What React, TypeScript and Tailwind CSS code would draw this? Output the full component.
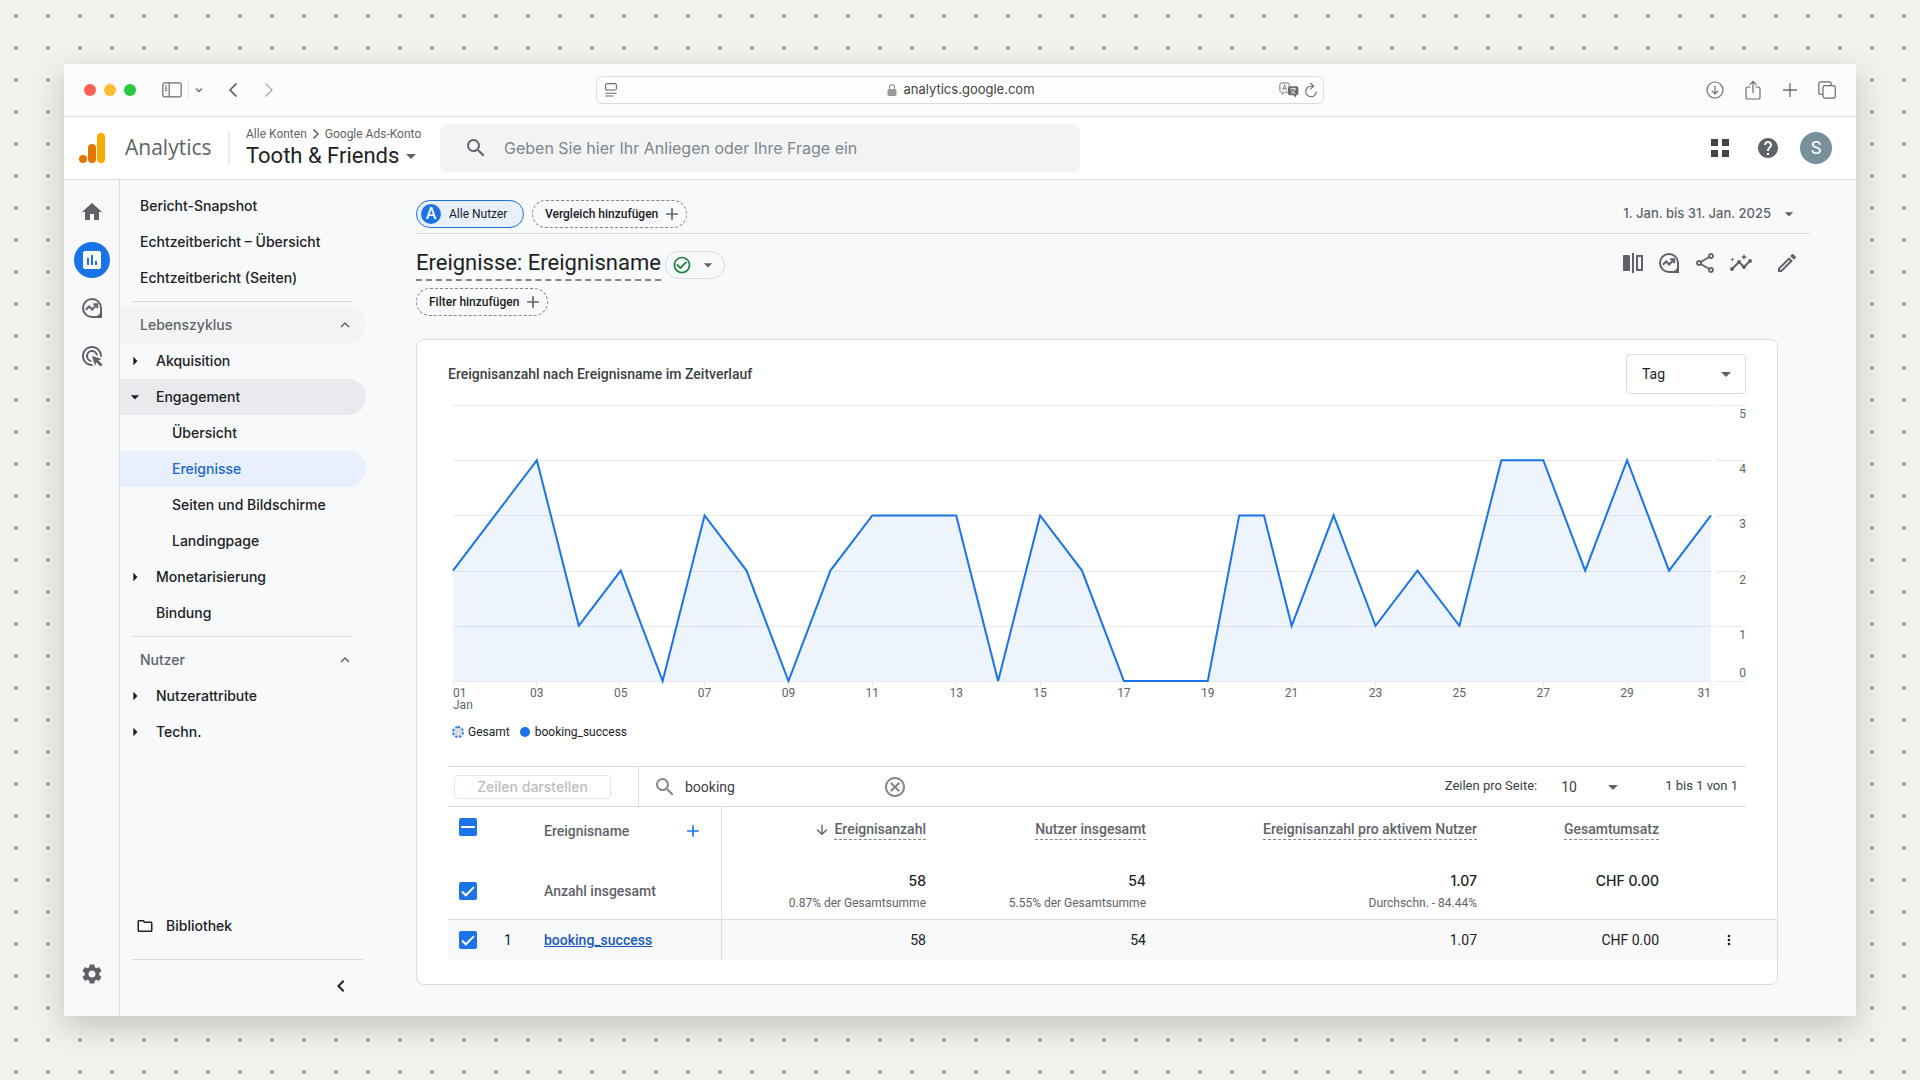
import React from 'react';
import {
  MdAdd,
  MdAdsClick,
  MdArrowDownward,
  MdArrowDropDown,
  MdArrowRight,
  MdCheckCircleOutline,
  MdChevronLeft,
  MdHelp,
  MdHome,
  MdInsertChart,
  MdInsights,
  MdKeyboardArrowUp,
  MdMoreVert,
  MdOutlineCancel,
  MdOutlineEdit,
  MdOutlineFolder,
  MdOutlineShare,
  MdSearch,
  MdSettings,
} from 'react-icons/md';

const SidebarIcon = () => (
  <svg className="h-4 w-5" viewBox="0 0 20 16" fill="none" stroke="#6b6b6b" strokeWidth="1.2">
    <rect x="0.8" y="0.8" width="18.4" height="14" rx="2" />
    <path d="M7.2 1v13.8M2.8 4h2.4M2.8 6.2h2.4M2.8 8.4h2.4" />
  </svg>
);

const ReaderIcon = () => (
  <svg className="h-[14px] w-3" viewBox="0 0 12 14" fill="none" stroke="#6b6b6b" strokeWidth="1.1">
    <rect x="0.6" y="0.6" width="10.8" height="6.4" rx="1.4" />
    <path d="M0.4 10.2h11.2M0.4 13h8" />
  </svg>
);

const TranslateIcon = () => (
  <svg className="h-4 w-5" viewBox="0 0 20 16" fill="none">
    <path
      d="M2.5 1h6.2c1 0 1.6.6 1.6 1.6v6c0 1-.6 1.6-1.6 1.6H5.6l-2.2 2.2v-2.2h-.9c-1 0-1.6-.6-1.6-1.6v-6C.9 1.6 1.5 1 2.5 1Z"
      stroke="#777"
    />
    <path d="m3.6 8.2 2-5.4 2 5.4M4.3 6.4h2.6" stroke="#777" strokeWidth="0.9" />
    <rect x="9" y="4.2" width="10.4" height="9" rx="1.8" fill="#6b6b6b" />
    <path d="m14.4 13 2.6 2.7V13Z" fill="#6b6b6b" />
    <path d="M11.3 6.8h5.8M14.2 5.6v1.2M12.2 11.6c2-.9 3.2-2.3 3.8-4.6M12.4 8.4c.6 1.5 1.9 2.6 3.8 3.2" stroke="#fff" strokeWidth="0.9" />
  </svg>
);

const ReloadIcon = () => (
  <svg className="h-4 w-3" viewBox="0 0 12 16" fill="none" stroke="#6b6b6b" strokeWidth="1.1">
    <path d="M8.4 4.2H6a5.3 5.3 0 1 0 5.3 5.4M5.4 1l3.2 3.2-3.2 3" />
  </svg>
);

const DownloadIcon = () => (
  <svg className="size-[18px]" viewBox="0 0 18 18" fill="none" stroke="#6b6b6b" strokeWidth="1.2">
    <circle cx="9" cy="9" r="8" />
    <path d="M9 4.8v8M5.8 9.8 9 13l3.2-3.2" />
  </svg>
);

const ShareUpIcon = () => (
  <svg className="h-5 w-[18px]" viewBox="0 0 18 20" fill="none" stroke="#6b6b6b" strokeWidth="1.2">
    <rect x="2" y="7" width="14" height="12" rx="1.6" />
    <path d="M6.6 7h4.8" stroke="#fcfcfc" strokeWidth="2" />
    <path d="M9 13V1.6M5.6 4.8 9 1.4l3.4 3.4" />
  </svg>
);

const TabsIcon = () => (
  <svg className="size-[18px]" viewBox="0 0 18 18" fill="none" stroke="#6b6b6b" strokeWidth="1.2">
    <rect x="5" y="4.6" width="12.3" height="12.6" rx="2" />
    <path d="M5 13.4H2.8c-1.3 0-2-.7-2-2V2.8c0-1.3.7-2 2-2h8.4c1.3 0 2 .7 2 2v1.8" />
  </svg>
);

const AnalyticsLogo = () => (
  <svg className="h-[30px] w-[26px]" viewBox="0 0 26 30">
    <rect x="18" y="0" width="8" height="30" rx="4" fill="#f9ab00" />
    <rect x="9" y="11" width="8" height="19" rx="4" fill="#e37400" />
    <circle cx="4" cy="26" r="4" fill="#e37400" />
  </svg>
);

const ExploreIcon = () => (
  <svg className="size-5" viewBox="0 0 20 20" fill="none" stroke="#5f6368" strokeWidth="2">
    <path d="M10 1a9 9 0 0 0 0 18h9v-9a9 9 0 0 0-9-9Z" />
    <path d="m3.8 11.8 3.4-3.3 3 3 4-4.2" />
    <path d="M11.2 6.2h4v4" />
    <path d="M19 13v6h-6c3-1 5-3 6-6Z" fill="#5f6368" stroke="none" />
  </svg>
);

const CompareIcon = () => (
  <svg className="size-[22px]" viewBox="0 0 22 22" fill="none">
    <rect x="1" y="3" width="7" height="16" rx="1" fill="#5f6368" />
    <path d="M11 1v20" stroke="#5f6368" strokeWidth="2" />
    <rect x="15" y="4" width="5" height="14" stroke="#5f6368" strokeWidth="2" />
  </svg>
);

const GridIcon = () => (
  <svg className="size-[18px]" viewBox="0 0 18 18" fill="#444">
    <path d="M0 0h7v7H0zM11 0h7v7h-7zM0 11h7v7H0zM11 11h7v7h-7z" />
  </svg>
);

const BrowserBar = () => (
  <div className="grid h-[53px] shrink-0 grid-cols-[1fr_minmax(0,728px)_1fr] items-center border-b border-[#dedede] bg-[#fcfcfc]">
    <div className="flex items-center pl-5">
      <div className="flex gap-2">
        <span className="size-3 rounded-full bg-[#ff5f57]" />
        <span className="size-3 rounded-full bg-[#febc2e]" />
        <span className="size-3 rounded-full bg-[#28c840]" />
      </div>
      <button aria-label="Seitenleiste" className="ml-[26px] flex">
        <SidebarIcon />
      </button>
      <button aria-label="Tabgruppen" className="ml-1.5 flex h-[18px] items-center border-l border-[#e5e5e5] pl-1.5">
        <svg className="size-2" viewBox="0 0 8 8" fill="none" stroke="#6b6b6b" strokeWidth="1.4">
          <path d="m1 2.5 3 3 3-3" />
        </svg>
      </button>
      <button aria-label="Zurück" className="ml-6 flex">
        <svg className="h-4 w-3" viewBox="0 0 12 16" fill="none" stroke="#555" strokeWidth="1.5">
          <path d="M9.5 1.5 3 8l6.5 6.5" />
        </svg>
      </button>
      <button aria-label="Vorwärts" className="ml-6 flex">
        <svg className="h-4 w-3" viewBox="0 0 12 16" fill="none" stroke="#b5b5b5" strokeWidth="1.5">
          <path d="M2.5 1.5 9 8l-6.5 6.5" />
        </svg>
      </button>
    </div>
    <div className="flex h-7 items-center rounded-md border border-[#dcdcdc] bg-[#fdfdfd] pl-2 pr-1.5">
      <div className="flex-1">
        <ReaderIcon />
      </div>
      <div className="flex items-center gap-1.5 font-[Inter,sans-serif] text-[13px] text-[#444]">
        <svg className="h-3 w-2.5" viewBox="0 0 10 12">
          <rect x="0.5" y="5" width="9" height="7" rx="1.5" fill="#999" />
          <path d="M2.5 5.5V3.2a2.5 2.5 0 0 1 5 0v2.3" fill="none" stroke="#999" strokeWidth="1.2" />
        </svg>
        analytics.google.com
      </div>
      <div className="flex flex-1 items-center justify-end gap-1.5">
        <TranslateIcon />
        <ReloadIcon />
      </div>
    </div>
    <div className="flex items-center justify-end gap-5 pr-5">
      <button aria-label="Downloads"><DownloadIcon /></button>
      <button aria-label="Teilen"><ShareUpIcon /></button>
      <button aria-label="Neuer Tab">
        <svg className="size-4" viewBox="0 0 16 16" stroke="#6b6b6b" strokeWidth="1.3">
          <path d="M8 1v14M1 8h14" />
        </svg>
      </button>
      <button aria-label="Tabs"><TabsIcon /></button>
    </div>
  </div>
);

const Header = () => (
  <header className="flex h-[63px] shrink-0 items-center border-b border-[#dadce0] bg-white pl-[15px] pr-6">
    <AnalyticsLogo />
    <span className="ml-5 w-[87px] font-['Open_Sans',sans-serif] text-[21px] text-[#5f6368]">Analytics</span>
    <div className="ml-4 h-8 w-0.5 bg-[#e8eaed]" />
    <div className="ml-4 w-[178px] whitespace-nowrap">
      <div className="flex items-center gap-1 text-xs leading-4 text-[#5f6368]">
        Alle Konten
        <svg className="h-3 w-2.5" viewBox="0 0 10 12" fill="none" stroke="#5f6368" strokeWidth="1.6">
          <path d="M2.5 1.5 7 6l-4.5 4.5" />
        </svg>
        Google Ads-Konto
      </div>
      <button className="flex items-center text-[22px] leading-7 text-[#202124]">
        Tooth &amp; Friends
        <MdArrowDropDown className="size-6 text-[#5f6368]" />
      </button>
    </div>
    <label className="ml-4 flex h-12 w-[640px] items-center rounded-md bg-[#f1f3f4] pl-6">
      <MdSearch className="size-6 text-[#5f6368]" />
      <input
        type="text"
        aria-label="Suche"
        placeholder="Geben Sie hier Ihr Anliegen oder Ihre Frage ein"
        className="ml-4 flex-1 bg-transparent font-[Inter,sans-serif] text-base outline-none placeholder:text-[#80868b]"
      />
    </label>
    <div className="ml-auto flex items-center">
      <button aria-label="Apps"><GridIcon /></button>
      <button aria-label="Hilfe" className="ml-[27px] mr-5"><MdHelp className="size-6 text-[#5f6368]" /></button>
      <button className="size-8 rounded-full bg-[#78909c] text-lg leading-8 text-white">S</button>
    </div>
  </header>
);

const Rail = () => (
  <nav className="flex w-14 shrink-0 flex-col items-center gap-3 border-r border-[#dadce0] pb-6 pt-[14px]">
    <a href="#" aria-label="Startseite" className="flex size-9 items-center justify-center">
      <MdHome className="size-6 text-[#5f6368]" />
    </a>
    <a href="#" aria-label="Berichte" className="flex size-9 items-center justify-center rounded-full bg-[#1a73e8]">
      <MdInsertChart className="size-6 text-white" />
    </a>
    <a href="#" aria-label="Explorative Datenanalyse" className="flex size-9 items-center justify-center">
      <ExploreIcon />
    </a>
    <a href="#" aria-label="Werbung" className="flex size-9 items-center justify-center">
      <MdAdsClick className="size-6 text-[#5f6368]" />
    </a>
    <a href="#" aria-label="Verwaltung" className="mt-auto flex size-9 items-center justify-center">
      <MdSettings className="size-6 text-[#5f6368]" />
    </a>
  </nav>
);

type NavItemProps = { label: string; level?: number; arrow?: 'right' | 'down'; className?: string };

const indent = ['pl-5', 'pl-9', 'pl-[52px]'];

const NavItem = ({ label, level = 0, arrow, className = 'text-[#202124]' }: NavItemProps) => (
  <a href="#" className={`relative mr-[3px] flex h-9 items-center rounded-r-full ${indent[level]} ${className}`}>
    {arrow === 'right' && <MdArrowRight className="absolute left-[5px] size-5" />}
    {arrow === 'down' && <MdArrowDropDown className="absolute left-[5px] size-5" />}
    {label}
  </a>
);

const NavSection = ({ label, className = '' }: { label: string; className?: string }) => (
  <button className={`mr-[3px] flex h-9 items-center justify-between rounded-r-full pl-5 pr-3 text-[#5f6368] ${className}`}>
    {label}
    <MdKeyboardArrowUp className="size-[18px]" />
  </button>
);

const Sidebar = () => (
  <nav className="flex w-[249px] shrink-0 flex-col pt-2 font-[Inter,sans-serif] text-sm font-medium">
    <NavItem label="Bericht-Snapshot" />
    <NavItem label="Echtzeitbericht – Übersicht" />
    <NavItem label="Echtzeitbericht (Seiten)" />
    <hr className="my-[5px] ml-3 mr-4 border-[#dadce0]" />
    <NavSection label="Lebenszyklus" className="bg-[#f1f3f4]" />
    <NavItem label="Akquisition" level={1} arrow="right" />
    <NavItem label="Engagement" level={1} arrow="down" className="bg-[#e8eaed] text-[#202124]" />
    <NavItem label="Übersicht" level={2} />
    <NavItem label="Ereignisse" level={2} className="bg-[#e8f0fe] text-[#1967d2]" />
    <NavItem label="Seiten und Bildschirme" level={2} />
    <NavItem label="Landingpage" level={2} />
    <NavItem label="Monetarisierung" level={1} arrow="right" />
    <NavItem label="Bindung" level={1} />
    <hr className="my-[5px] ml-3 mr-4 border-[#dadce0]" />
    <NavSection label="Nutzer" />
    <NavItem label="Nutzerattribute" level={1} arrow="right" />
    <NavItem label="Techn." level={1} arrow="right" />
    <a href="#" className="mt-auto flex h-9 items-center gap-3 pl-4 text-[#202124]">
      <MdOutlineFolder className="size-[18px]" />
      Bibliothek
    </a>
    <hr className="ml-3 mr-1.5 mt-[15px] border-[#dadce0]" />
    <button aria-label="Einklappen" className="mr-4 flex h-14 items-center self-end pb-1">
      <MdChevronLeft className="size-6 text-[#202124]" />
    </button>
  </nav>
);

const chip = 'flex h-7 items-center rounded-full text-xs text-[#202124]';
const iconButton = 'flex size-6 items-center justify-center text-[#5f6368]';

const ReportHeader = () => (
  <div className="mr-[46px]">
    <div className="flex items-center justify-between border-b border-[#dadce0] pb-[5px]">
      <div className="flex gap-2">
        <button className={`${chip} w-[108px] gap-2 border border-[#1a73e8] bg-[#e8f0fe] pl-1`}>
          <span className="flex size-5 items-center justify-center rounded-full bg-[#1a73e8] text-base font-medium text-white">A</span>
          Alle Nutzer
        </button>
        <button className={`${chip} gap-1 border border-dashed border-[#80868b] pl-3 pr-1 font-medium`}>
          Vergleich hinzufügen
          <MdAdd className="size-5 text-[#5f6368]" />
        </button>
      </div>
      <button className="flex items-center gap-2 pr-[11px] font-[Inter,sans-serif] text-[13px] font-medium text-[#5f6368]">
        1. Jan. bis 31. Jan. 2025
        <MdArrowDropDown className="size-5" />
      </button>
    </div>
    <div className="flex items-start justify-between pr-[11px] pt-[15px]">
      <div className="flex items-center gap-1">
        <h1 className="border-b-2 border-dashed border-[#80868b] pb-0.5 text-[22px] leading-7 text-[#202124]">
          Ereignisse: Ereignisname
        </h1>
        <button aria-label="Status" className="flex h-7 w-[60px] items-center justify-between rounded-full border border-[#dadce0] px-1.5">
          <MdCheckCircleOutline className="size-5 text-[#188038]" />
          <MdArrowDropDown className="size-5 text-[#5f6368]" />
        </button>
      </div>
      <div className="flex h-7 items-center gap-3">
        <button aria-label="Vergleichen" className={iconButton}><CompareIcon /></button>
        <button aria-label="Analysieren" className={iconButton}><ExploreIcon /></button>
        <button aria-label="Teilen" className={iconButton}><MdOutlineShare className="size-6" /></button>
        <button aria-label="Statistiken" className={iconButton}><MdInsights className="size-6" /></button>
        <button aria-label="Bearbeiten" className={`${iconButton} ml-2.5`}><MdOutlineEdit className="size-6" /></button>
      </div>
    </div>
    <button className={`${chip} mt-[7px] gap-1 border border-dashed border-[#80868b] pl-3 pr-1 font-medium`}>
      Filter hinzufügen
      <MdAdd className="size-5 text-[#5f6368]" />
    </button>
  </div>
);

// [day, events]
const points: [number, number][] = [
  [1, 2], [2, 3], [3, 4], [4, 1], [5, 2], [6, 0], [7, 3], [8, 2], [9, 0], [10, 2],
  [11, 3], [13, 3], [14, 0], [15, 3], [16, 2], [17, 0], [19, 0], [19.75, 3], [20.34, 3], [21, 1],
  [22, 3], [23, 1], [24, 2], [25, 1], [26, 4], [27, 4], [28, 2], [29, 4], [30, 2], [31, 3],
];

const line = points.map(([d, v]) => `${d - 1},${5 - v}`).join(' ');
const days = ['01', '03', '05', '07', '09', '11', '13', '15', '17', '19', '21', '23', '25', '27', '29', '31'];

const Chart = () => (
  <div className="ml-[5px] mt-[11px] flex gap-1 text-xs leading-3 text-[#5f6368]">
    <div className="flex-1">
      <div className="relative flex h-[277px] flex-col border-b border-[#e8eaed]">
        {[5, 4, 3, 2, 1].map((n) => (
          <div key={n} className="flex-1 border-t border-[#e8eaed]" />
        ))}
        <svg className="absolute inset-0 size-full overflow-visible" viewBox="0 0 30 5" preserveAspectRatio="none">
          <polygon points={`0,5 ${line} 30,5`} fill="#1a73e8" fillOpacity="0.08" />
          <polyline points={line} fill="none" stroke="#1a73e8" strokeWidth="2" vectorEffect="non-scaling-stroke" />
        </svg>
      </div>
      <div className="flex justify-between">
        {days.map((day, i) => (
          <div
            key={day}
            className={`flex w-0 flex-col ${i === 0 ? 'items-start' : i === days.length - 1 ? 'items-end' : 'items-center'}`}
          >
            <span className="h-[5px] w-px bg-[#e8eaed]" />
            <span>{day}</span>
            {i === 0 && <span>Jan</span>}
          </div>
        ))}
      </div>
    </div>
    <div className="flex h-[277px] w-[31px] flex-col border-b border-[#e8eaed] text-right">
      {[5, 4, 3, 2, 1].map((n) => (
        <div key={n} className="flex flex-1 flex-col justify-between border-t border-[#e8eaed] py-0.5">
          <span>{n}</span>
          {n === 1 && <span>0</span>}
        </div>
      ))}
    </div>
  </div>
);

const CheckBox = ({ label, mixed = false }: { label: string; mixed?: boolean }) => (
  <span className="relative flex size-[18px]">
    <input type="checkbox" defaultChecked aria-label={label} className="size-[18px] appearance-none rounded-xs bg-[#1a73e8]" />
    <svg className="pointer-events-none absolute inset-0" viewBox="0 0 18 18" fill="none" stroke="#fff" strokeWidth="2">
      <path d={mixed ? 'M2 9h14' : 'm3 9.5 3.8 3.8 8.2-8.2'} />
    </svg>
  </span>
);

const dotted = 'inline-block border-b border-dashed border-[#80868b]';
const subText = 'mt-1 font-[Roboto,sans-serif] text-xs font-normal text-[#5f6368]';

const DataTable = () => (
  <div className="mt-[26px]">
    <div className="mr-[31px] flex h-[41px] items-center border-y border-[#dadce0] text-sm text-[#3c4043]">
      <button disabled className="ml-1.5 h-6 w-[157px] rounded-sm border border-[#e4e5e7] font-[Inter,sans-serif] text-sm font-medium leading-5 text-[#bdbdbd]">
        Zeilen darstellen
      </button>
      <label className="ml-[27px] flex h-full items-center border-l border-[#dadce0] pl-[14px]">
        <MdSearch className="size-6 text-[#80868b]" />
        <input type="text" aria-label="Suchen" defaultValue="booking" className="ml-2 w-[194px] bg-transparent outline-none" />
      </label>
      <button aria-label="Löschen" className="ml-1"><MdOutlineCancel className="size-6 text-[#80868b]" /></button>
      <label htmlFor="rows" className="ml-auto text-[13px]">Zeilen pro Seite:</label>
      <div className="relative ml-6 flex items-center">
        <select id="rows" className="w-16 appearance-none bg-transparent outline-none">
          <option>10</option>
        </select>
        <MdArrowDropDown className="pointer-events-none absolute right-0 size-6 text-[#5f6368]" />
      </div>
      <span className="ml-10 mr-2 text-[13px]">1 bis 1 von 1</span>
    </div>
    <table className="w-full table-fixed text-right text-sm text-[#202124]">
      <colgroup>
        <col className="w-10" />
        <col className="w-10" />
        <col className="w-[193px]" />
        <col className="w-[205px]" />
        <col className="w-[220px]" />
        <col />
        <col className="w-[182px]" />
        <col className="w-[118px]" />
      </colgroup>
      <thead>
        <tr className="h-14 align-top text-[#5f6368]">
          <th className="pl-[11px] pt-[11px]"><CheckBox label="Alle auswählen" mixed /></th>
          <th />
          <th className="border-r border-[#dadce0] pl-4 pr-[18px] pt-3.5 font-medium">
            <div className="flex items-center justify-between">
              Ereignisname
              <button aria-label="Dimension hinzufügen"><MdAdd className="size-5 text-[#1a73e8]" /></button>
            </div>
          </th>
          <th className="pt-3 font-medium">
            <span className="flex items-center justify-end gap-1">
              <MdArrowDownward className="size-4" />
              <span className={dotted}>Ereignisanzahl</span>
            </span>
          </th>
          <th className="pt-3 font-medium"><span className={dotted}>Nutzer insgesamt</span></th>
          <th className="pt-3 font-medium"><span className={dotted}>Ereignisanzahl pro aktivem Nutzer</span></th>
          <th className="pt-3 font-medium"><span className={dotted}>Gesamtumsatz</span></th>
          <th />
        </tr>
      </thead>
      <tbody>
        <tr className="h-14 border-b border-[#dadce0] font-[Inter,sans-serif] font-medium">
          <td className="pl-[11px]"><CheckBox label="Anzahl insgesamt" /></td>
          <td />
          <td className="border-r border-[#dadce0] pl-4 text-left font-[Roboto,sans-serif] text-[#5f6368]">Anzahl insgesamt</td>
          <td>58<div className={subText}>0.87% der Gesamtsumme</div></td>
          <td>54<div className={subText}>5.55% der Gesamtsumme</div></td>
          <td>1.07<div className={subText}>Durchschn. - 84.44%</div></td>
          <td className="pt-2 align-top">CHF 0.00</td>
          <td />
        </tr>
        <tr className="h-[41px] bg-[#f8f9fa]">
          <td className="pl-[11px]"><CheckBox label="booking_success" /></td>
          <td className="text-center">1</td>
          <td className="border-r border-[#dadce0] pl-4 text-left font-medium">
            <a href="#" className="text-[#185abc] underline">booking_success</a>
          </td>
          <td>58</td>
          <td>54</td>
          <td>1.07</td>
          <td>CHF 0.00</td>
          <td className="pr-10">
            <button aria-label="Mehr" className="flex w-full justify-end"><MdMoreVert className="size-4" /></button>
          </td>
        </tr>
      </tbody>
    </table>
  </div>
);

const ReportCard = () => (
  <section className="mr-[78px] mt-[23px] rounded-lg border border-[#dadce0] bg-white pb-6 pl-[31px]">
    <div className="mr-[31px]">
      <div className="flex items-center justify-between pt-[14px]">
        <h2 className="text-sm font-medium text-[#3c4043]">Ereignisanzahl nach Ereignisname im Zeitverlauf</h2>
        <div className="relative flex items-center">
          <select aria-label="Zeitraum" className="h-10 w-[120px] appearance-none rounded-sm border border-[#dadce0] bg-white px-[15px] text-sm text-[#202124]">
            <option>Tag</option>
          </select>
          <MdArrowDropDown className="pointer-events-none absolute right-2 size-6 text-[#5f6368]" />
        </div>
      </div>
      <Chart />
      <div className="mt-[13px] flex items-center text-xs text-[#202124]">
        <span className="ml-1 size-3 rounded-full border-2 border-dotted border-[#1a73e8] bg-[#dadce0]" />
        <span className="ml-1">Gesamt</span>
        <span className="ml-2.5 size-2.5 rounded-full bg-[#1a73e8]" />
        <span className="ml-[5px]">booking_success</span>
      </div>
    </div>
    <DataTable />
  </section>
);

const App = () => {
  return (
    <div className="flex min-h-screen bg-[#f2f1ed] bg-[radial-gradient(circle_at_center,#a3a29f_2px,transparent_2px)] bg-[size:32px_32px] p-16 font-[Roboto,sans-serif]">
      <div className="flex min-w-0 flex-1 flex-col bg-[#f8f9fb] shadow-[0_10px_30px_rgba(0,0,0,0.2)]">
        <BrowserBar />
        <Header />
        <div className="flex flex-1">
          <Rail />
          <Sidebar />
          <main className="min-w-0 flex-1 pl-[47px] pt-5">
            <ReportHeader />
            <ReportCard />
          </main>
        </div>
      </div>
    </div>
  );
};

export default App;
